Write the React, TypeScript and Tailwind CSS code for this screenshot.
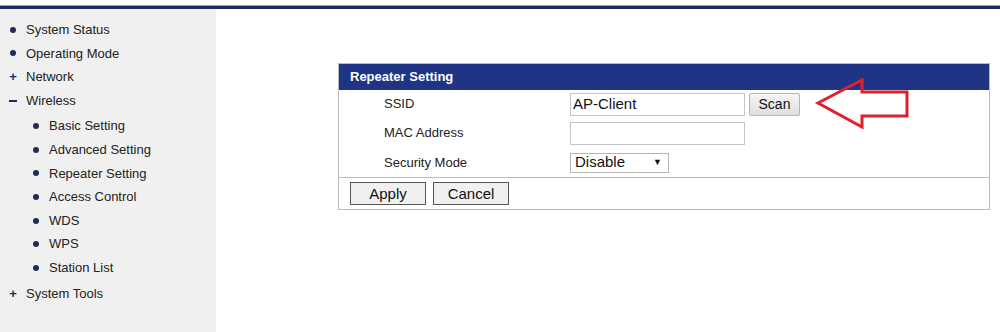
const font = { fontFamily: '"Liberation Sans", Arial, sans-serif' };

type Item = { label: string; mark: "dot" | "plus" | "minus"; sub?: boolean };

const menu: Item[] = [
  { label: "System Status", mark: "dot" },
  { label: "Operating Mode", mark: "dot" },
  { label: "Network", mark: "plus" },
  { label: "Wireless", mark: "minus" },
  { label: "Basic Setting", mark: "dot", sub: true },
  { label: "Advanced Setting", mark: "dot", sub: true },
  { label: "Repeater Setting", mark: "dot", sub: true },
  { label: "Access Control", mark: "dot", sub: true },
  { label: "WDS", mark: "dot", sub: true },
  { label: "WPS", mark: "dot", sub: true },
  { label: "Station List", mark: "dot", sub: true },
  { label: "System Tools", mark: "plus" },
];

function Mark({ mark }: { mark: Item["mark"] }) {
  if (mark === "dot") return <span className="w-[6px] h-[6px] rounded-full bg-[#1f2a5e]" />;
  if (mark === "plus") return <span className="text-[13px] font-bold text-[#1f2a5e] leading-none">+</span>;
  return <span className="w-[8px] h-[2px] bg-[#1f2a5e]" />;
}

function Sidebar() {
  return (
    <aside className="w-[216px] h-[324px] bg-[#f0f0f0] pt-[9px]">
      <ul className="flex flex-col">
        {menu.map((m) => (
          <li
            key={m.label}
            className={`flex items-center h-[23.6px] text-[13px] text-[#222] ${m.sub ? "pl-[31px]" : "pl-[8px]"} ${
              m.label === "System Tools" || m.label === "Basic Setting" ? "mt-[2px]" : ""
            }`}
          >
            <span className="w-[10px] flex items-center justify-center mr-[8px]">
              <Mark mark={m.mark} />
            </span>
            <span>{m.label}</span>
          </li>
        ))}
      </ul>
    </aside>
  );
}

function Row({ label, h, children }: { label: string; h: string; children: React.ReactNode }) {
  return (
    <div className={`flex items-center ${h}`}>
      <span className="w-[231px] pl-[45px] text-[13px] text-[#222]">{label}</span>
      {children}
    </div>
  );
}

function App() {
  return (
    <div className="w-[1000px] h-[332px] bg-white overflow-hidden relative" style={font}>
      {/* top bar */}
      <div className="h-[5px] bg-white" />
      <div className="h-[1px] bg-[#8ea0c8]" />
      <div className="h-[3px] bg-[#1f2d5c]" />

      <div className="flex">
        <Sidebar />

        <main className="flex-1 pl-[122px] pt-[54px]">
          <div className="w-[652px] border border-[#bcbcbc]">
            <div className="h-[26px] bg-[#1f3485] flex items-center pl-[11px] text-[13px] font-bold text-white">
              Repeater Setting
            </div>

            <Row label="SSID" h="h-[28px]">
              <div className="w-[175px] h-[23px] border border-[#c4c4c4] flex items-center px-[2px] text-[15px] text-[#111]">
                AP-Client
              </div>
              <button className="ml-[4px] w-[51px] h-[23px] border border-[#b5b5b5] rounded-[2px] bg-gradient-to-b from-[#f6f6f6] to-[#dedede] text-[14px] text-[#111]">
                Scan
              </button>
            </Row>
            <Row label="MAC Address" h="h-[30px]">
              <div className="w-[175px] h-[23px] border border-[#c4c4c4]" />
            </Row>
            <Row label="Security Mode" h="h-[29px]">
              <div className="w-[99px] h-[20px] border border-[#b5b5b5] flex items-center justify-between pl-[4px] pr-[6px] text-[15px] text-[#111]">
                <span>Disable</span>
                <span className="text-[9px]">▼</span>
              </div>
            </Row>

            <div className="border-t border-[#bcbcbc] h-[32px] flex items-center pl-[11px] gap-[7px]">
              <button className="w-[76px] h-[23px] border border-[#555] bg-[#f0f0f0] text-[15px] text-[#111]">
                Apply
              </button>
              <button className="w-[76px] h-[23px] border border-[#555] bg-[#f0f0f0] text-[15px] text-[#111]">
                Cancel
              </button>
            </div>
          </div>
        </main>
      </div>

      {/* red annotation arrow */}
      <svg className="absolute left-[810px] top-[74px]" width="104" height="60" viewBox="0 0 104 60">
        <polygon
          points="8,29 52,6 52,18 97,18 97,42 52,42 52,53"
          fill="none"
          stroke="#e0202a"
          strokeWidth="3"
          strokeLinejoin="miter"
        />
      </svg>
    </div>
  );
}

export default App;
